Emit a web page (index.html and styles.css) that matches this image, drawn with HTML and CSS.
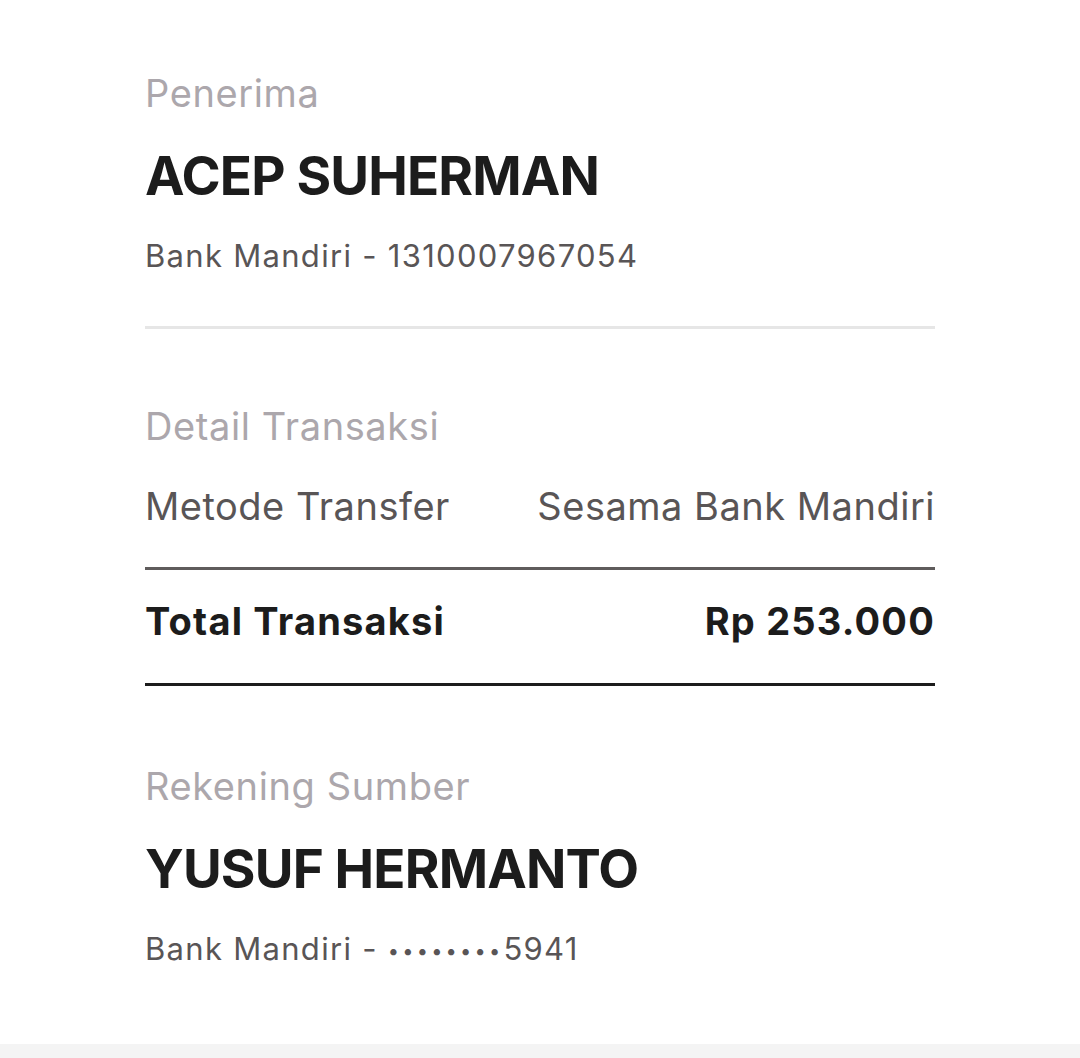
FILE: index.html
```html
<!DOCTYPE html>
<html lang="id">
<head>
<meta charset="utf-8">
<title>Detail Transaksi</title>
<link rel="stylesheet" href="styles.css">
</head>
<body>
<main class="receipt">
  <section class="block">
    <div class="label">Penerima</div>
    <div class="name">ACEP SUHERMAN</div>
    <div class="sub">Bank Mandiri - 1310007967054</div>
  </section>
  <hr class="sep sep-light">
  <section class="block detail">
    <div class="label">Detail Transaksi</div>
    <div class="row">
      <span>Metode Transfer</span>
      <span>Sesama Bank Mandiri</span>
    </div>
  </section>
  <hr class="sep sep-mid">
  <div class="row total">
    <span>Total Transaksi</span>
    <span>Rp 253.000</span>
  </div>
  <hr class="sep sep-dark">
  <section class="block source">
    <div class="label">Rekening Sumber</div>
    <div class="name">YUSUF HERMANTO</div>
    <div class="sub">Bank Mandiri - <span class="dots">••••••••</span>5941</div>
  </section>
</main>
<footer class="strip"></footer>
</body>
</html>
```
FILE: styles.css
```css
* { box-sizing: border-box; }
html, body {
  margin: 0;
  padding: 0;
  background: #ffffff;
  font-family: Inter, "Noto Sans", sans-serif;
}
.receipt {
  height: 1044px;
  padding: 71px 0 0 145px;
  width: 935px;
}
.block { margin: 0; }
.label {
  font-size: 38px;
  line-height: 44px;
  color: #aca7ac;
  font-weight: 400;
  letter-spacing: 0.6px;
}
.name {
  margin-top: 29px;
  font-size: 53px;
  line-height: 64px;
  font-weight: 700;
  color: #1c1c1c;
  letter-spacing: -0.85px;
}
.sub {
  margin-top: 30px;
  font-size: 31px;
  line-height: 36px;
  color: #595556;
  letter-spacing: 1.3px;
}
.dots {
  font-size: 20px;
  letter-spacing: 3.2px;
  vertical-align: 2px;
}
.sep {
  border: 0;
  margin: 0;
  height: 3px;
  width: 790px;
}
.sep-light { background: #e6e6e6; margin-top: 52px; }
.sep-mid { background: #5f5c5c; margin-top: 38px; }
.sep-dark { background: #1c1c1c; margin-top: 39px; }
.detail { margin-top: 75px; }
.row {
  display: flex;
  justify-content: space-between;
  font-size: 38px;
  line-height: 46px;
  color: #595556;
  letter-spacing: 0.5px;
}
.detail .row { margin-top: 35px; }
.total {
  margin-top: 28px;
  font-weight: 700;
  color: #1c1c1c;
  letter-spacing: 1.2px;
}
.source { margin-top: 78px; }
.strip {
  height: 14px;
  background: #f4f4f4;
}
```
